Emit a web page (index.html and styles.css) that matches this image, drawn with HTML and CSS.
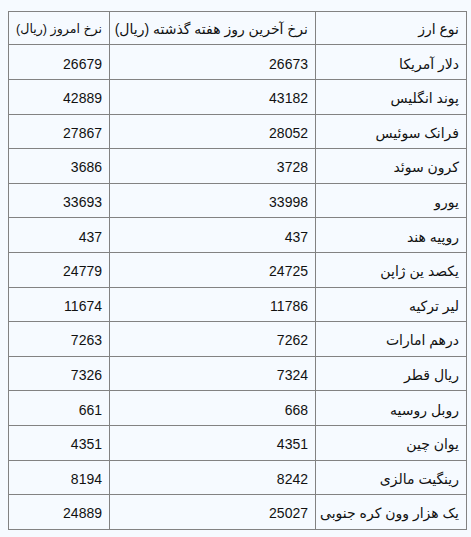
FILE: index.html
```html
<!DOCTYPE html>
<html lang="fa">
<head>
<meta charset="utf-8">
<link rel="stylesheet" href="styles.css">
</head>
<body>
<table class="rates" dir="rtl">
<thead>
<tr><th class="c-name">نوع ارز</th><th class="c-last">نرخ آخرین روز هفته گذشته (ریال)</th><th class="c-today">نرخ امروز (ریال)</th></tr>
</thead>
<tbody>
<tr><td>دلار آمریکا</td><td>26673</td><td>26679</td></tr>
<tr><td>پوند انگلیس</td><td>43182</td><td>42889</td></tr>
<tr><td>فرانک سوئیس</td><td>28052</td><td>27867</td></tr>
<tr><td>کرون سوئد</td><td>3728</td><td>3686</td></tr>
<tr><td>یورو</td><td>33998</td><td>33693</td></tr>
<tr><td>روپیه هند</td><td>437</td><td>437</td></tr>
<tr><td>یکصد ین ژاپن</td><td>24725</td><td>24779</td></tr>
<tr><td>لیر ترکیه</td><td>11786</td><td>11674</td></tr>
<tr><td>درهم امارات</td><td>7262</td><td>7263</td></tr>
<tr><td>ریال قطر</td><td>7324</td><td>7326</td></tr>
<tr><td>روبل روسیه</td><td>668</td><td>661</td></tr>
<tr><td>یوان چین</td><td>4351</td><td>4351</td></tr>
<tr><td>رینگیت مالزی</td><td>8242</td><td>8194</td></tr>
<tr><td>یک هزار وون کره جنوبی</td><td>25027</td><td>24889</td></tr>
</tbody>
</table>
</body>
</html>
```
FILE: styles.css
```css
html, body {
  margin: 0;
  background: #f6faff;
}
body {
  padding: 11px 5px 0 8px;
  font-family: "Liberation Sans", "DejaVu Sans", sans-serif;
  font-size: 14px;
  color: #111;
}
.rates {
  border-collapse: collapse;
  width: 458px;
  table-layout: fixed;
}
.rates th,
.rates td {
  box-sizing: border-box;
  border: 1px solid #828282;
  text-align: right;
  font-weight: normal;
  padding: 0 7px 0 7px;
  vertical-align: middle;
  white-space: nowrap;
  overflow: hidden;
}
.rates th {
  height: 33.4px;
  padding-top: 1px;
}
.rates td {
  height: 34.6px;
  padding-top: 3px;
}
.c-name { width: 151px; }
.c-last { width: 206px; }
.c-today {
  width: 101px;
  padding-left: 0;
}
.rates th.c-today {
  font-size: 12.6px;
  padding-left: 0;
}
```
